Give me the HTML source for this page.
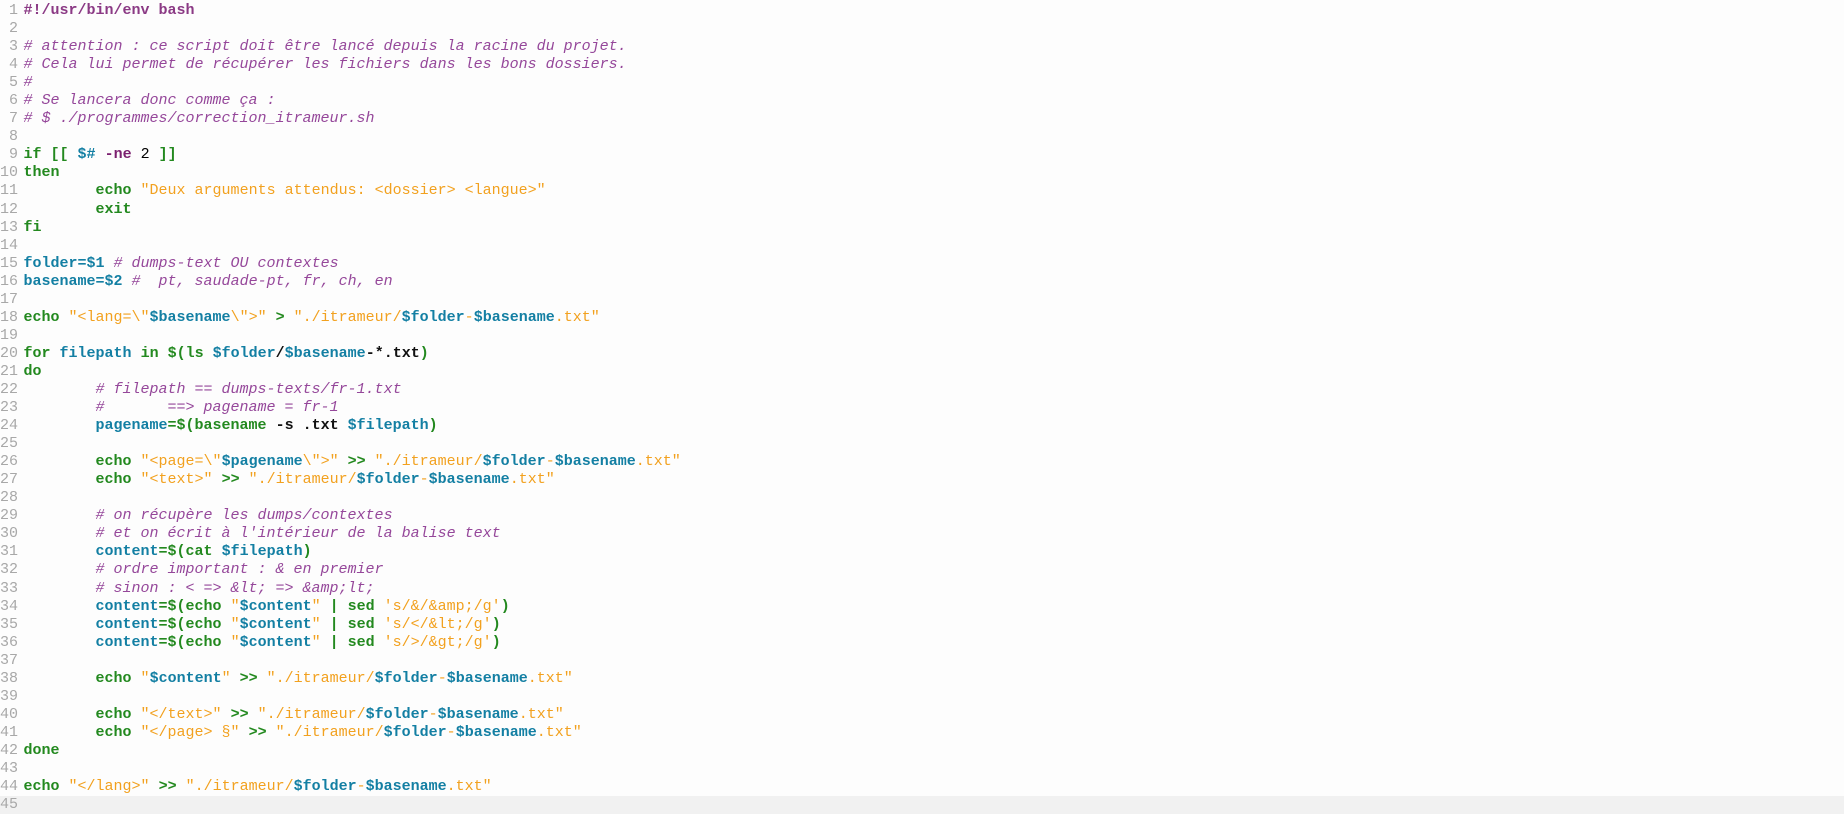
<!DOCTYPE html>
<html><head><meta charset="utf-8"><style>
html,body{margin:0;padding:0;background:#fdfdfd;width:1844px;height:805px;overflow:hidden}
#c{position:absolute;top:2px;left:0;font-family:"Liberation Mono",monospace;font-size:15px;line-height:18.05px}
.l{height:18.05px;white-space:pre;position:relative}
.n{display:inline-block;width:18px;text-align:right;color:#a8a8a8;margin-right:5.5px}
.k{color:#23891f;font-weight:bold}
.v{color:#137fa3;font-weight:bold}
.c{color:#95479a;font-style:italic}
.s{color:#f2a11f}
.sh{color:#8b3a85;font-weight:bold}
.b{color:#111;font-weight:bold}
.p{color:#7b1f6f;font-weight:bold}
.cur{position:absolute;left:0;top:796px;width:1844px;height:18px;background:#f1f1f1}
</style></head><body>
<div class="cur"></div>
<div id="c">
<div class="l"><span class="n">1</span><span class="sh">#!/usr/bin/env bash</span></div>
<div class="l"><span class="n">2</span></div>
<div class="l"><span class="n">3</span><span class="c"># attention : ce script doit être lancé depuis la racine du projet.</span></div>
<div class="l"><span class="n">4</span><span class="c"># Cela lui permet de récupérer les fichiers dans les bons dossiers.</span></div>
<div class="l"><span class="n">5</span><span class="c">#</span></div>
<div class="l"><span class="n">6</span><span class="c"># Se lancera donc comme ça :</span></div>
<div class="l"><span class="n">7</span><span class="c"># $ ./programmes/correction_itrameur.sh</span></div>
<div class="l"><span class="n">8</span></div>
<div class="l"><span class="n">9</span><span class="k">if [[</span> <span class="v">$#</span> <span class="p">-ne</span> 2 <span class="k">]]</span></div>
<div class="l"><span class="n">10</span><span class="k">then</span></div>
<div class="l"><span class="n">11</span>        <span class="k">echo</span> <span class="s">"Deux arguments attendus: &lt;dossier&gt; &lt;langue&gt;"</span></div>
<div class="l"><span class="n">12</span>        <span class="k">exit</span></div>
<div class="l"><span class="n">13</span><span class="k">fi</span></div>
<div class="l"><span class="n">14</span></div>
<div class="l"><span class="n">15</span><span class="v">folder=$1</span> <span class="c"># dumps-text OU contextes</span></div>
<div class="l"><span class="n">16</span><span class="v">basename=$2</span> <span class="c">#  pt, saudade-pt, fr, ch, en</span></div>
<div class="l"><span class="n">17</span></div>
<div class="l"><span class="n">18</span><span class="k">echo</span> <span class="s">"&lt;lang=\"</span><span class="v">$basename</span><span class="s">\"&gt;"</span> <span class="k">&gt;</span> <span class="s">"./itrameur/</span><span class="v">$folder</span><span class="s">-</span><span class="v">$basename</span><span class="s">.txt"</span></div>
<div class="l"><span class="n">19</span></div>
<div class="l"><span class="n">20</span><span class="k">for</span> <span class="v">filepath</span> <span class="k">in</span> <span class="k">$(</span><span class="k">ls</span> <span class="v">$folder</span><span class="b">/</span><span class="v">$basename</span><span class="b">-*.txt</span><span class="k">)</span></div>
<div class="l"><span class="n">21</span><span class="k">do</span></div>
<div class="l"><span class="n">22</span>        <span class="c"># filepath == dumps-texts/fr-1.txt</span></div>
<div class="l"><span class="n">23</span>        <span class="c">#       ==&gt; pagename = fr-1</span></div>
<div class="l"><span class="n">24</span>        <span class="v">pagename</span><span class="k">=$(basename</span> <span class="b">-s .txt</span> <span class="v">$filepath</span><span class="k">)</span></div>
<div class="l"><span class="n">25</span></div>
<div class="l"><span class="n">26</span>        <span class="k">echo</span> <span class="s">"&lt;page=\"</span><span class="v">$pagename</span><span class="s">\"&gt;"</span> <span class="k">&gt;&gt;</span> <span class="s">"./itrameur/</span><span class="v">$folder</span><span class="s">-</span><span class="v">$basename</span><span class="s">.txt"</span></div>
<div class="l"><span class="n">27</span>        <span class="k">echo</span> <span class="s">"&lt;text&gt;"</span> <span class="k">&gt;&gt;</span> <span class="s">"./itrameur/</span><span class="v">$folder</span><span class="s">-</span><span class="v">$basename</span><span class="s">.txt"</span></div>
<div class="l"><span class="n">28</span></div>
<div class="l"><span class="n">29</span>        <span class="c"># on récupère les dumps/contextes</span></div>
<div class="l"><span class="n">30</span>        <span class="c"># et on écrit à l'intérieur de la balise text</span></div>
<div class="l"><span class="n">31</span>        <span class="v">content</span><span class="k">=$(cat</span> <span class="v">$filepath</span><span class="k">)</span></div>
<div class="l"><span class="n">32</span>        <span class="c"># ordre important : &amp; en premier</span></div>
<div class="l"><span class="n">33</span>        <span class="c"># sinon : &lt; =&gt; &amp;lt; =&gt; &amp;amp;lt;</span></div>
<div class="l"><span class="n">34</span>        <span class="v">content</span><span class="k">=$(echo</span> <span class="s">"</span><span class="v">$content</span><span class="s">"</span> <span class="k">| sed</span> <span class="s">'s/&amp;/&amp;amp;/g'</span><span class="k">)</span></div>
<div class="l"><span class="n">35</span>        <span class="v">content</span><span class="k">=$(echo</span> <span class="s">"</span><span class="v">$content</span><span class="s">"</span> <span class="k">| sed</span> <span class="s">'s/&lt;/&amp;lt;/g'</span><span class="k">)</span></div>
<div class="l"><span class="n">36</span>        <span class="v">content</span><span class="k">=$(echo</span> <span class="s">"</span><span class="v">$content</span><span class="s">"</span> <span class="k">| sed</span> <span class="s">'s/&gt;/&amp;gt;/g'</span><span class="k">)</span></div>
<div class="l"><span class="n">37</span></div>
<div class="l"><span class="n">38</span>        <span class="k">echo</span> <span class="s">"</span><span class="v">$content</span><span class="s">"</span> <span class="k">&gt;&gt;</span> <span class="s">"./itrameur/</span><span class="v">$folder</span><span class="s">-</span><span class="v">$basename</span><span class="s">.txt"</span></div>
<div class="l"><span class="n">39</span></div>
<div class="l"><span class="n">40</span>        <span class="k">echo</span> <span class="s">"&lt;/text&gt;"</span> <span class="k">&gt;&gt;</span> <span class="s">"./itrameur/</span><span class="v">$folder</span><span class="s">-</span><span class="v">$basename</span><span class="s">.txt"</span></div>
<div class="l"><span class="n">41</span>        <span class="k">echo</span> <span class="s">"&lt;/page&gt; §"</span> <span class="k">&gt;&gt;</span> <span class="s">"./itrameur/</span><span class="v">$folder</span><span class="s">-</span><span class="v">$basename</span><span class="s">.txt"</span></div>
<div class="l"><span class="n">42</span><span class="k">done</span></div>
<div class="l"><span class="n">43</span></div>
<div class="l"><span class="n">44</span><span class="k">echo</span> <span class="s">"&lt;/lang&gt;"</span> <span class="k">&gt;&gt;</span> <span class="s">"./itrameur/</span><span class="v">$folder</span><span class="s">-</span><span class="v">$basename</span><span class="s">.txt"</span></div>
<div class="l"><span class="n">45</span></div>
</div>
</body></html>
